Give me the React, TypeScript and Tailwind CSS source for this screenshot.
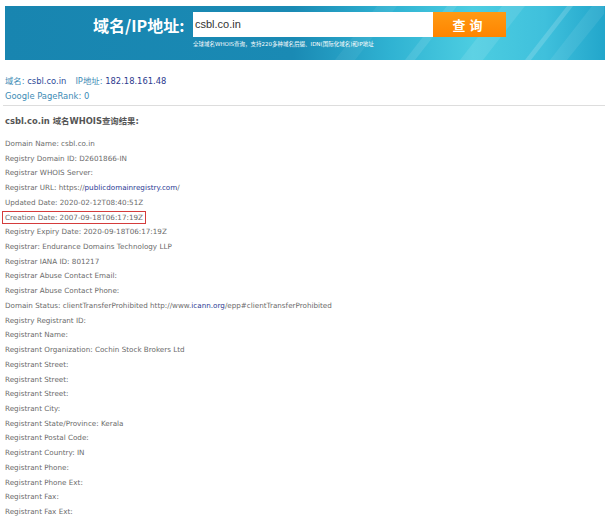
import React from "react";

const rows: { label: string; value?: React.ReactNode; boxed?: boolean }[] = [
  { label: "Domain Name", value: "csbl.co.in" },
  { label: "Registry Domain ID", value: "D2601866-IN" },
  { label: "Registrar WHOIS Server" },
  {
    label: "Registrar URL",
    value: (
      <>
        https://<a className="text-[#2b3a94]">publicdomainregistry.com</a>/
      </>
    ),
  },
  { label: "Updated Date", value: "2020-02-12T08:40:51Z" },
  { label: "Creation Date", value: "2007-09-18T06:17:19Z", boxed: true },
  { label: "Registry Expiry Date", value: "2020-09-18T06:17:19Z" },
  { label: "Registrar", value: "Endurance Domains Technology LLP" },
  { label: "Registrar IANA ID", value: "801217" },
  { label: "Registrar Abuse Contact Email" },
  { label: "Registrar Abuse Contact Phone" },
  {
    label: "Domain Status",
    value: (
      <>
        clientTransferProhibited http://www.<a className="text-[#2b3a94]">icann.org</a>
        /epp#clientTransferProhibited
      </>
    ),
  },
  { label: "Registry Registrant ID" },
  { label: "Registrant Name" },
  { label: "Registrant Organization", value: "Cochin Stock Brokers Ltd" },
  { label: "Registrant Street" },
  { label: "Registrant Street" },
  { label: "Registrant Street" },
  { label: "Registrant City" },
  { label: "Registrant State/Province", value: "Kerala" },
  { label: "Registrant Postal Code" },
  { label: "Registrant Country", value: "IN" },
  { label: "Registrant Phone" },
  { label: "Registrant Phone Ext" },
  { label: "Registrant Fax" },
  { label: "Registrant Fax Ext" },
];

const cjk = "font-['DejaVu_Sans','Noto_Sans_CJK_SC',sans-serif]";

export default function App() {
  return (
    <div className={`w-[610px] h-[517px] overflow-hidden bg-white ${cjk}`}>
      {/* Search banner */}
      <div className="relative mx-[5px] mt-[6px] h-[54px] overflow-hidden bg-[linear-gradient(90deg,#1885b0_0%,#1a8ab4_48%,#2fb2d2_64%,#4ccde1_78%,#3fc0dc_90%,#22a6cb_100%)]">
        <svg className="absolute inset-0" width="599" height="54" viewBox="0 0 599 54">
          <polygon points="330,54 372,0 392,0 350,54" fill="#ffffff" opacity="0.06" />
          <polygon points="400,54 442,0 452,0 410,54" fill="#ffffff" opacity="0.1" />
          <polygon points="455,54 497,0 520,0 478,54" fill="#ffffff" opacity="0.1" />
          <polygon points="520,54 562,0 568,0 526,54" fill="#ffffff" opacity="0.16" />
          <polygon points="545,54 587,0 599,0 599,8 562,54" fill="#ffffff" opacity="0.08" />
        </svg>
        <div className="relative flex pl-[88px] pt-[6px]">
          <div className="w-[94px] h-[25px] flex items-center text-[16px] font-bold text-white leading-none whitespace-nowrap font-['Noto_Sans_CJK_SC',sans-serif]">
            域名/IP地址:
          </div>
          <div className="ml-[6px] flex flex-col">
            <div className="flex">
              <div className="w-[240px] h-[25px] bg-white flex items-center pl-[2px] text-[11px] text-[#333] font-['Liberation_Sans',sans-serif]">
                csbl.co.in
              </div>
              <div className="w-[73px] h-[25px] bg-[linear-gradient(180deg,#ff9a12,#ff8400)] flex items-center justify-center text-white text-[13px] font-bold font-['Noto_Sans_CJK_SC',sans-serif] tracking-[4px]">
                查询
              </div>
            </div>
            <div className="mt-[3px] text-[5.5px] text-white leading-[8px] whitespace-nowrap font-['DejaVu_Sans','Noto_Sans_CJK_SC',sans-serif]">
              全球域名WHOIS查询，支持220多种域名后缀、IDN(国际化域名)和IP地址
            </div>
          </div>
        </div>
      </div>

      {/* Domain info */}
      <div className="px-[5px] mt-[14px] text-[8.4px] leading-[15px]">
        <div>
          <span className="text-[#3c8bb5]">域名: </span>
          <span className="text-[#2d4a98]">csbl.co.in</span>
          <span className="text-[#3c8bb5] ml-[9px]">IP地址: </span>
          <span className="text-[#2d3a8e]">182.18.161.48</span>
        </div>
        <div className="text-[#3c8bb5]">Google PageRank: 0</div>
      </div>
      <div className="mx-[3px] mr-[5px] mt-[1px] border-t border-[#dddddd]" />

      <div className="px-[5px] mt-[9px] text-[8.4px] leading-[12px] font-bold text-[#555]">
        csbl.co.in 域名WHOIS查询结果:
      </div>

      {/* WHOIS rows */}
      <div className="px-[5px] mt-[10px] text-[7.2px] leading-[14.72px] text-[#6a6a6a]">
        {rows.map((r, i) => (
          <div key={i} className="whitespace-nowrap">
            <span
              className={
                r.boxed
                  ? "-ml-[3px] px-[2px] py-[1px] border border-[#d43c3c]"
                  : ""
              }
            >
              {r.label}: {r.value}
            </span>
          </div>
        ))}
      </div>
    </div>
  );
}
